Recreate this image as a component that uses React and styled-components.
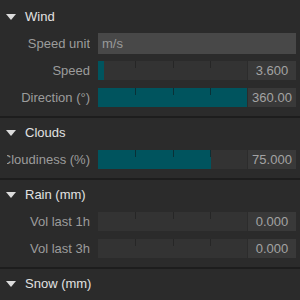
import React from "react";
import styled, { createGlobalStyle } from "styled-components";

const Global = createGlobalStyle`
  html, body {
    margin: 0;
    padding: 0;
    background: #2b2b2b;
  }
  body {
    font-family: "Liberation Sans", Arial, sans-serif;
    font-size: 13px;
  }
`;

const Panel = styled.div`
  width: 300px;
  height: 300px;
  overflow: hidden;
  padding-top: 2px;
  box-sizing: border-box;
  background: #2b2b2b;
`;

const Section = styled.div`
  padding-bottom: 5px;
  border-bottom: 2px solid #1d1d1d;
  &:last-child {
    border-bottom: none;
  }
`;

const Header = styled.div`
  height: 28px;
  display: flex;
  align-items: center;
  padding-left: 6px;
  color: #e2e2e2;
`;

const Arrow = styled.span`
  width: 0;
  height: 0;
  border-left: 5px solid transparent;
  border-right: 5px solid transparent;
  border-top: 6px solid #dcdcdc;
  margin-right: 9px;
  margin-top: 1px;
`;

const Row = styled.div`
  height: 27px;
  display: flex;
  align-items: center;
  padding-left: 7px;
  padding-right: 4px;
`;

const Label = styled.div`
  width: 83px;
  margin-right: 8px;
  display: flex;
  justify-content: flex-end;
  overflow: hidden;
  white-space: nowrap;
  color: #9c9c9c;
`;

const TextBox = styled.div`
  flex: 1;
  height: 21px;
  display: flex;
  align-items: center;
  padding-left: 4px;
  background: #484848;
  color: #9a9a9a;
`;

const Slider = styled.div`
  flex: 1;
  height: 19px;
  display: flex;
`;

const Track = styled.div`
  flex: 1;
  position: relative;
  background: #333333;
`;

const Fill = styled.div`
  height: 100%;
  background: #00545e;
`;

const Tick = styled.div`
  position: absolute;
  top: 0;
  width: 1px;
  height: 7px;
  background: ${(p) => (p.$on ? "#0a3036" : "#262626")};
`;

const Value = styled.div`
  width: 48px;
  border-left: 1px solid #2c2c2c;
  background: #393939;
  display: flex;
  align-items: center;
  justify-content: center;
  color: #a3a3a3;
`;

const SliderRow = ({ label, pct, value }) => (
  <Row>
    <Label>{label}</Label>
    <Slider>
      <Track>
        <Fill style={{ width: `${pct}%` }} />
        {[25, 50, 75].map((t) => (
          <Tick key={t} $on={t < pct} style={{ left: `${t}%` }} />
        ))}
      </Track>
      <Value>{value}</Value>
    </Slider>
  </Row>
);

const Group = ({ title, children }) => (
  <Section>
    <Header>
      <Arrow />
      {title}
    </Header>
    {children}
  </Section>
);

export default function App() {
  return (
    <Panel>
      <Global />
      <Group title="Wind">
        <Row>
          <Label>Speed unit</Label>
          <TextBox>m/s</TextBox>
        </Row>
        <SliderRow label="Speed" pct={4} value="3.600" />
        <SliderRow label="Direction (°)" pct={100} value="360.00" />
      </Group>
      <Group title="Clouds">
        <SliderRow label="Cloudiness (%)" pct={76} value="75.000" />
      </Group>
      <Group title="Rain (mm)">
        <SliderRow label="Vol last 1h" pct={0} value="0.000" />
        <SliderRow label="Vol last 3h" pct={0} value="0.000" />
      </Group>
      <Group title="Snow (mm)" />
    </Panel>
  );
}
